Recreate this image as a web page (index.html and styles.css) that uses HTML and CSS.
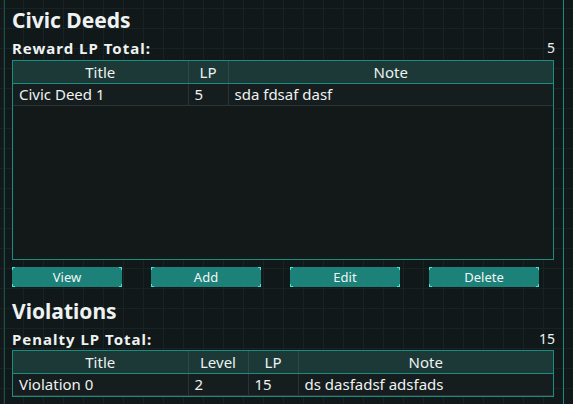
FILE: index.html
```html
<!DOCTYPE html>
<html>
<head>
<meta charset="utf-8">
<link rel="stylesheet" href="styles.css">
</head>
<body>
<div class="frame">
  <section class="section">
    <h1 class="heading">Civic Deeds</h1>
    <div class="total"><span class="total-label">Reward LP Total:</span><span class="total-value">5</span></div>
    <div class="table-box tall">
      <table class="grid-table">
        <colgroup><col style="width:175px"><col style="width:40px"><col></colgroup>
        <thead><tr><th>Title</th><th>LP</th><th>Note</th></tr></thead>
        <tbody><tr><td>Civic Deed 1</td><td>5</td><td>sda fdsaf dasf</td></tr></tbody>
      </table>
    </div>
    <div class="buttons">
      <button class="btn">View</button>
      <button class="btn">Add</button>
      <button class="btn">Edit</button>
      <button class="btn">Delete</button>
    </div>
  </section>
  <section class="section second">
    <h1 class="heading">Violations</h1>
    <div class="total"><span class="total-label">Penalty LP Total:</span><span class="total-value">15</span></div>
    <div class="table-box">
      <table class="grid-table">
        <colgroup><col style="width:175px"><col style="width:60px"><col style="width:50px"><col></colgroup>
        <thead><tr><th>Title</th><th>Level</th><th>LP</th><th>Note</th></tr></thead>
        <tbody><tr><td>Violation 0</td><td>2</td><td>15</td><td>ds dasfadsf adsfads</td></tr></tbody>
      </table>
    </div>
  </section>
</div>
</body>
</html>
```
FILE: styles.css
```css
html, body {
  margin: 0;
  padding: 0;
  height: 100%;
}
body {
  background-color: #111819;
  background-image:
    repeating-linear-gradient(90deg, transparent 0, transparent 3px, #1a2324 3px, #1a2324 4px, transparent 4px, transparent 20px),
    repeating-linear-gradient(180deg, transparent 0, transparent 8px, #1a2324 8px, #1a2324 9px, transparent 9px, transparent 20px);
  font-family: "Noto Sans", "Open Sans", sans-serif;
  color: #eef2f2;
  overflow: hidden;
}
.frame {
  margin-left: 4px;
  min-height: 404px;
  border-left: 1px solid #17514c;
  border-right: 1px solid #1a8a80;
  padding: 8px 8px 0 7px;
  box-sizing: border-box;
  width: 560px;
}
.section {
  display: flex;
  flex-direction: column;
}
.heading {
  margin: 0;
  font-size: 21px;
  line-height: 24px;
  font-weight: 700;
  height: 26px;
}
.total {
  display: flex;
  justify-content: space-between;
  font-size: 15px;
  line-height: 18px;
  height: 26px;
  padding-top: 5px;
  box-sizing: border-box;
}
.total-label {
  font-weight: 700;
  letter-spacing: 1px;
}
.total-value {
  font-weight: 400;
  font-size: 14px;
}
.table-box {
  border: 1px solid #1a8c80;
  background: #131819;
  width: 542px;
  box-sizing: border-box;
}
.table-box.tall {
  height: 200px;
}
.grid-table {
  width: 100%;
  border-collapse: collapse;
  table-layout: fixed;
  font-size: 15px;
}
.grid-table th {
  background: #1c3937;
  font-weight: 400;
  height: 22px;
  padding: 0;
  border-bottom: 1px solid #1a8c80;
  border-left: 1px solid #2c4a48;
  text-align: center;
  line-height: 22px;
}
.grid-table td {
  background: #161d1e;
  height: 21px;
  padding: 0 0 0 6px;
  border-bottom: 1px solid #2b3334;
  border-left: 1px solid #2b3334;
  line-height: 21px;
  text-align: left;
  white-space: nowrap;
}
.grid-table th:first-child,
.grid-table td:first-child {
  border-left: none;
}
.buttons {
  display: flex;
  gap: 29px;
  margin-top: 7px;
  height: 20px;
}
.btn {
  width: 110px;
  height: 20px;
  padding: 0;
  border: none;
  background-color: #1c8178;
  background-image:
    linear-gradient(#3ee8d8, #3ee8d8), linear-gradient(#3ee8d8, #3ee8d8),
    linear-gradient(#3ee8d8, #3ee8d8), linear-gradient(#3ee8d8, #3ee8d8),
    linear-gradient(#3ee8d8, #3ee8d8), linear-gradient(#3ee8d8, #3ee8d8),
    linear-gradient(#3ee8d8, #3ee8d8), linear-gradient(#3ee8d8, #3ee8d8);
  background-repeat: no-repeat;
  background-size: 3px 1px, 1px 3px, 3px 1px, 1px 3px, 3px 1px, 1px 3px, 3px 1px, 1px 3px;
  background-position: left top, left top, right top, right top, left bottom, left bottom, right bottom, right bottom;
  color: #f2f6f6;
  font-family: "Noto Sans", sans-serif;
  font-size: 13px;
  line-height: 20px;
}
.second {
  margin-top: 12px;
}
.second .total {
  height: 25px;
}
```
